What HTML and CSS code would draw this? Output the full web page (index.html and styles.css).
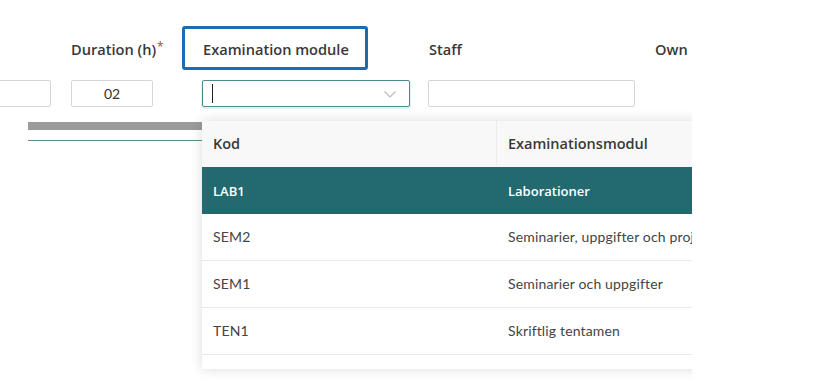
FILE: index.html
```html
<!DOCTYPE html>
<html>
<head>
<meta charset="utf-8">
<link rel="stylesheet" href="styles.css">
</head>
<body>
<div class="page">
  <div class="form">
    <div class="label"></div>
    <div class="label">Duration (h)<span class="req">*</span></div>
    <div class="label"><span class="focus">Examination module</span></div>
    <div class="label">Staff</div>
    <div class="label">Own resources</div>

    <div class="cell"><div class="input first"></div></div>
    <div class="cell"><div class="input num">02</div></div>
    <div class="cell">
      <div class="input select">
        <span class="caret"></span>
        <svg class="chev" width="12" height="7" viewBox="0 0 12 7"><path d="M0.5 0.5 L6 6 L11.5 0.5" fill="none" stroke="#b9b9b9" stroke-width="1.1"/></svg>
      </div>
    </div>
    <div class="cell"><div class="input staff"></div></div>
    <div class="cell"></div>
  </div>

  <div class="below">
    <div class="bar"></div>
    <div class="rule"></div>
  </div>

  <div class="dropdown">
    <div class="row head">
      <div class="c1">Kod</div>
      <div class="c2">Examinationsmodul</div>
    </div>
    <div class="row sel">
      <div class="c1">LAB1</div>
      <div class="c2">Laborationer</div>
    </div>
    <div class="row">
      <div class="c1">SEM2</div>
      <div class="c2">Seminarier, uppgifter och projekt</div>
    </div>
    <div class="row">
      <div class="c1">SEM1</div>
      <div class="c2">Seminarier och uppgifter</div>
    </div>
    <div class="row">
      <div class="c1">TEN1</div>
      <div class="c2">Skriftlig tentamen</div>
    </div>
  </div>
</div>
</body>
</html>
```

FILE: styles.css
```css
* { box-sizing: border-box; }
html, body { margin: 0; padding: 0; background: #fff; }
body {
  font-family: "Lato", "Liberation Sans", sans-serif;
  color: #333;
  width: 820px;
  height: 381px;
  overflow: hidden;
}
.page {
  position: relative;
  width: 692px;
  height: 381px;
  overflow: hidden;
}
.form {
  display: grid;
  grid-template-columns: 71px 131px 226px 227px 100px;
  grid-template-rows: 20px 27px;
  row-gap: 21px;
  padding-top: 39px;
}
.label {
  font-family: "Open Sans", "Lato", sans-serif;
  font-size: 14.6px;
  font-weight: 600;
  line-height: 20px;
  color: #383838;
  white-space: nowrap;
}
.label:nth-child(3) { padding-left: 1px; }
.label:nth-child(4) { padding-left: 1px; }
.req {
  color: #d0312d;
  font-weight: 400;
  font-size: 12px;
  position: relative;
  top: -4px;
  margin-left: 1px;
}
.focus { position: relative; }
.focus::before {
  content: "";
  position: absolute;
  left: -21px;
  right: -19px;
  top: -13px;
  bottom: -11px;
  border: 3px solid #1a6db3;
  border-radius: 3px;
}
.input {
  height: 27px;
  border: 1px solid #d6d6d6;
  border-radius: 2px;
  background: #fff;
  font-size: 14px;
  line-height: 25px;
  color: #333;
}
.input.first { width: 60px; margin-left: -9px; }
.input.num { width: 82px; text-align: center; }
.input.select {
  width: 208px;
  border-color: #4e8b8d;
  box-shadow: 0 1px 0 1px rgba(110, 180, 180, 0.18);
  display: flex;
  align-items: center;
  justify-content: space-between;
  padding: 0 13px 0 9px;
}
.caret {
  display: block;
  width: 1px;
  height: 19px;
  background: #222;
}
.chev { display: block; margin-top: 1px; }
.input.staff { width: 207px; }

.below {
  padding-left: 28px;
  padding-top: 15px;
}
.bar {
  width: 174px;
  height: 8px;
  background: #9b9b9b;
}
.rule {
  width: 174px;
  height: 1px;
  margin-top: 10px;
  background: #5f8d8f;
}

.dropdown {
  position: absolute;
  left: 202px;
  top: 121px;
  width: 520px;
  height: 248px;
  background: #fff;
  box-shadow: 0 0 12px rgba(0, 0, 0, 0.14);
}
.row {
  display: grid;
  grid-template-columns: 295px 1fr;
  height: 47px;
  border-bottom: 1px solid #e9e9e9;
  font-size: 14px;
  color: #444;
  letter-spacing: 0.15px;
}
.row > div {
  display: flex;
  align-items: center;
  padding-left: 11px;
  white-space: nowrap;
}
.row.head {
  height: 46px;
  background: #f8f8f8;
  border-bottom: none;
  font-family: "Open Sans", "Lato", sans-serif;
  font-size: 14.5px;
  font-weight: 600;
  letter-spacing: 0;
  color: #383838;
  padding-bottom: 2px;
}
.row.head .c1 { border-right: 1px solid #ececec; }
.row.sel {
  background: #236a70;
  color: #fff;
  font-family: "Open Sans", "Lato", sans-serif;
  font-size: 13px;
  font-weight: 600;
  letter-spacing: 0;
  border-bottom: none;
}
.row:nth-child(n+3) > div { padding-bottom: 1px; }
```
